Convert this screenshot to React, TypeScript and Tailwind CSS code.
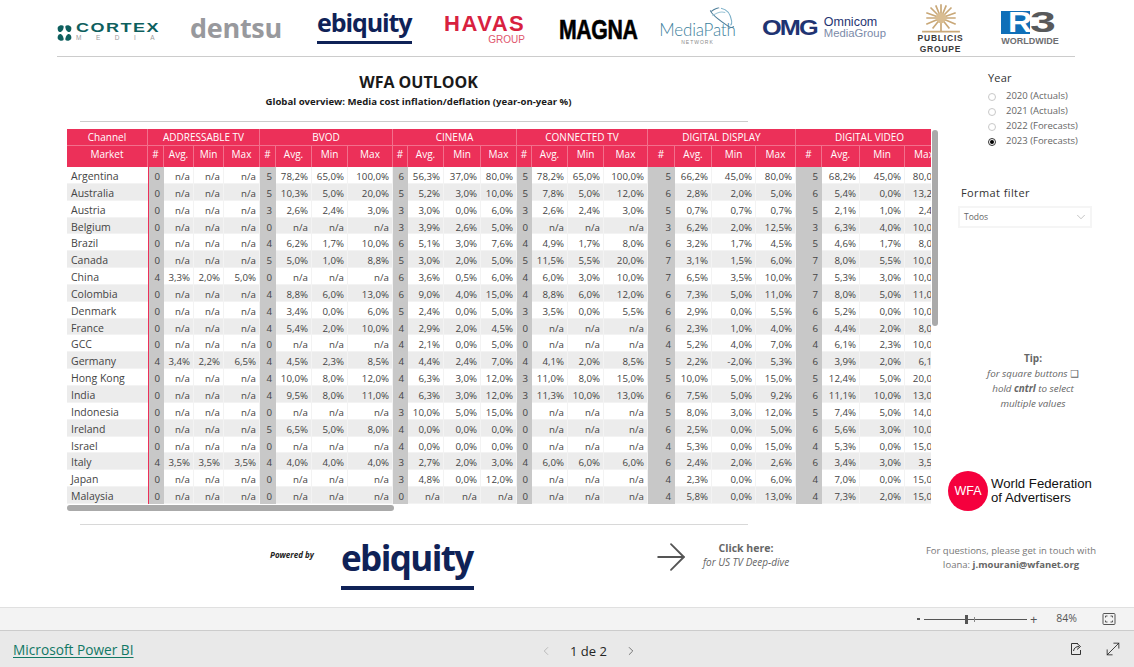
import React from 'react';
import { ArrowRight, ChevronDown, ChevronLeft, ChevronRight, MoveDiagonal } from 'lucide-react';

type Group = [string, string, string, string] | null;
type Row = [string, Group, Group, Group, Group, Group, Group];

const rows: Row[] = [
  ['Argentina', null, ['5', '78,2%', '65,0%', '100,0%'], ['6', '56,3%', '37,0%', '80,0%'], ['5', '78,2%', '65,0%', '100,0%'], ['5', '66,2%', '45,0%', '80,0%'], ['5', '68,2%', '45,0%', '80,0%']],
  ['Australia', null, ['5', '10,3%', '5,0%', '20,0%'], ['5', '5,2%', '3,0%', '10,0%'], ['5', '7,8%', '5,0%', '12,0%'], ['6', '2,8%', '2,0%', '5,0%'], ['6', '5,4%', '0,0%', '13,2%']],
  ['Austria', null, ['3', '2,6%', '2,4%', '3,0%'], ['3', '3,0%', '0,0%', '6,0%'], ['3', '2,6%', '2,4%', '3,0%'], ['5', '0,7%', '0,7%', '0,7%'], ['5', '2,1%', '1,0%', '2,4%']],
  ['Belgium', null, null, ['3', '3,9%', '2,6%', '5,0%'], null, ['3', '6,2%', '2,0%', '12,5%'], ['3', '6,3%', '4,0%', '10,0%']],
  ['Brazil', null, ['4', '6,2%', '1,7%', '10,0%'], ['6', '5,1%', '3,0%', '7,6%'], ['4', '4,9%', '1,7%', '8,0%'], ['6', '3,2%', '1,7%', '4,5%'], ['5', '4,6%', '1,7%', '8,0%']],
  ['Canada', null, ['5', '5,0%', '1,0%', '8,8%'], ['5', '3,0%', '2,0%', '5,0%'], ['5', '11,5%', '5,5%', '20,0%'], ['7', '3,1%', '1,5%', '6,0%'], ['7', '8,0%', '5,5%', '10,0%']],
  ['China', ['4', '3,3%', '2,0%', '5,0%'], null, ['6', '3,6%', '0,5%', '6,0%'], ['4', '6,0%', '3,0%', '10,0%'], ['7', '6,5%', '3,5%', '10,0%'], ['7', '5,3%', '3,0%', '10,0%']],
  ['Colombia', null, ['4', '8,8%', '6,0%', '13,0%'], ['6', '9,0%', '4,0%', '15,0%'], ['4', '8,8%', '6,0%', '12,0%'], ['6', '7,3%', '5,0%', '11,0%'], ['7', '8,0%', '5,0%', '11,0%']],
  ['Denmark', null, ['4', '3,4%', '0,0%', '6,0%'], ['5', '2,4%', '0,0%', '5,0%'], ['3', '3,5%', '0,0%', '5,5%'], ['6', '2,9%', '0,0%', '5,5%'], ['6', '5,2%', '0,0%', '10,0%']],
  ['France', null, ['4', '5,4%', '2,0%', '10,0%'], ['4', '2,9%', '2,0%', '4,5%'], null, ['6', '2,3%', '1,0%', '4,0%'], ['6', '4,4%', '2,0%', '8,0%']],
  ['GCC', null, null, ['4', '2,1%', '0,0%', '5,0%'], null, ['4', '5,2%', '4,0%', '7,0%'], ['4', '6,1%', '2,3%', '10,0%']],
  ['Germany', ['4', '3,4%', '2,2%', '6,5%'], ['4', '4,5%', '2,3%', '8,5%'], ['4', '4,4%', '2,4%', '7,0%'], ['4', '4,1%', '2,0%', '8,5%'], ['5', '2,2%', '-2,0%', '5,3%'], ['6', '3,9%', '2,0%', '6,1%']],
  ['Hong Kong', null, ['4', '10,0%', '8,0%', '12,0%'], ['4', '6,3%', '3,0%', '12,0%'], ['3', '11,0%', '8,0%', '15,0%'], ['5', '10,0%', '5,0%', '15,0%'], ['5', '12,4%', '5,0%', '20,0%']],
  ['India', null, ['4', '9,5%', '8,0%', '11,0%'], ['4', '6,3%', '3,0%', '12,0%'], ['3', '11,3%', '10,0%', '13,0%'], ['6', '7,5%', '5,0%', '9,2%'], ['6', '11,1%', '10,0%', '13,0%']],
  ['Indonesia', null, null, ['3', '10,0%', '5,0%', '15,0%'], null, ['5', '8,0%', '3,0%', '12,0%'], ['5', '7,4%', '5,0%', '14,0%']],
  ['Ireland', null, ['5', '6,5%', '5,0%', '8,0%'], ['4', '0,0%', '0,0%', '0,0%'], null, ['6', '2,5%', '0,0%', '5,0%'], ['6', '5,6%', '3,0%', '10,0%']],
  ['Israel', null, null, ['4', '0,0%', '0,0%', '0,0%'], null, ['4', '5,3%', '0,0%', '15,0%'], ['4', '5,3%', '0,0%', '15,0%']],
  ['Italy', ['4', '3,5%', '3,5%', '3,5%'], ['4', '4,0%', '4,0%', '4,0%'], ['3', '2,7%', '2,0%', '3,0%'], ['4', '6,0%', '6,0%', '6,0%'], ['6', '2,4%', '2,0%', '2,6%'], ['6', '3,4%', '3,0%', '3,5%']],
  ['Japan', null, null, ['3', '4,8%', '0,0%', '12,0%'], null, ['4', '2,3%', '0,0%', '6,0%'], ['4', '7,0%', '0,0%', '15,0%']],
  ['Malaysia', null, null, null, null, ['4', '5,8%', '0,0%', '13,0%'], ['4', '7,3%', '2,0%', '15,0%']],
];

const channels = ['ADDRESSABLE TV', 'BVOD', 'CINEMA', 'CONNECTED TV', 'DIGITAL DISPLAY', 'DIGITAL VIDEO'];

// same columns for both header rows and the body
const gridCols =
  'grid grid-cols-[81px_16px_30px_30px_36px_16px_36px_36px_45px_15px_36px_37px_36px_15px_36px_36px_44px_27px_37px_44px_40px_26px_38px_45px_39px]';

const CortexLogo = () => (
  <div className="flex w-[103px] items-center gap-[4px] pt-[9px]">
    <svg viewBox="0 0 16 18" className="h-[18px] w-[15px] shrink-0" fill="#0e5f5e">
      <path d="M1 2.500C2.500 .2 6 .2 7 1.500c.5 2-.8 5.500-3 6.500C1.500 8.500 0 5 1 2.500Z" />
      <path d="M15 2.500C13.500 .2 10 .2 9 1.500c-.5 2 .8 5.500 3 6.500 2.500.5 4-3 3-5.500Z" />
      <path d="M1 15.500c1.500 2.300 5 2.300 6 1 .5-2-.8-5.500-3-6.500-2.500-.5-4 3-3 5.500Z" />
      <path d="M15 15.500c-1.500 2.300-5 2.300-6 1-.5-2 .8-5.500 3-6.500 2.500-.5 4 3 3 5.500Z" />
    </svg>
    <div className="flex flex-col">
      <span className="origin-left scale-x-[1.5] font-['Liberation_Sans'] text-[12px] leading-[11px] font-bold tracking-[1px] text-[#0e5f5e]">CORTEX</span>
      <span className="font-['Liberation_Sans'] text-[6.500px] leading-[8px] tracking-[14.500px] whitespace-nowrap text-[#9a9a9a]">MEDIA</span>
    </div>
  </div>
);

const EbiquityLogo = ({ big }: { big?: boolean }) => (
  <div className={big ? 'flex w-[133px] flex-col' : 'flex w-[95px] flex-col'}>
    <span
      className={
        big
          ? "font-['Open_Sans'] text-[35px] leading-[38px] font-bold tracking-[-1.600px] whitespace-nowrap text-[#0f2257]"
          : "font-['Open_Sans'] text-[25px] leading-[27px] font-bold tracking-[-1.100px] whitespace-nowrap text-[#0f2257]"
      }
    >
      ebiquity
    </span>
    <div className={big ? 'mt-[9px] h-[4px] bg-[#0f2257]' : 'mt-[5px] h-[3px] bg-[#0f2257]'} />
  </div>
);

const MediaPathLogo = () => (
  <div className="relative flex w-[75px] flex-col items-center pt-[11px]">
    <svg viewBox="0 0 30 24" className="absolute top-[-3px] right-[-2px] h-[26px] w-[32px]" fill="none" stroke="#4f7f9a" strokeWidth="1">
      <path d="M6 4C9 1 13 .5 13 1M5 3c1 4 8 9 17 15 2 1.500 4 1 5 0" />
      <path d="M15 1c6 1 9 6 10 12 .3 2 0 3-1 4" stroke="#7cb0c8" />
      <path d="M7 8c4-3 9-4 12-3" stroke="#9cc5d6" />
    </svg>
    <span className="font-['Lato'] text-[17px] leading-[18px] font-light tracking-[-.2px] whitespace-nowrap text-[#3d7f9d]">MediaPath</span>
    <span className="font-['Liberation_Sans'] text-[5px] leading-[7px] tracking-[1px] text-[#8a8a8a]">NETWORK</span>
  </div>
);

const PublicisLogo = () => (
  <div className="flex w-[45px] flex-col items-center">
    <svg viewBox="0 0 40 28" className="h-[30px] w-[42px]" stroke="#c9a878" strokeWidth="1.600" fill="none">
      <path d="M20 14V1M20 14l-5-12M20 14l5-12M20 14 10 4M20 14 30 4M20 14 6 9M20 14 34 9M20 14H6M20 14h14M20 14 6 20M20 14l14 6M20 14l-8 10M20 14l8 10M20 14v13M2 27h36" />
      <circle cx="20" cy="14" r="5" fill="#d9bd92" stroke="none" />
    </svg>
    <span className="font-['Liberation_Sans'] text-[8.500px] leading-[10px] font-bold tracking-[.8px] text-[#3a3a3a]">PUBLICIS</span>
    <span className="mt-[1px] font-['Liberation_Sans'] text-[8.500px] leading-[10px] font-bold tracking-[.8px] text-[#3a3a3a]">GROUPE</span>
  </div>
);

const R3Logo = () => (
  <div className="flex w-[58px] flex-col items-center">
    <div className="relative flex h-[23px] w-[58px] items-center">
      <div className="h-[23px] w-[29px] bg-[#0f6fb8]" />
      <span className="absolute top-0 left-[7px] origin-left scale-x-[1.15] font-['Liberation_Sans'] text-[29px] leading-[23px] font-bold text-white">R</span>
      <span className="absolute top-0 left-[29px] origin-left scale-x-[1.6] font-['Liberation_Sans'] text-[29px] leading-[23px] font-bold text-[#58595b]">3</span>
    </div>
    <span className="mt-[2px] font-['Liberation_Sans'] text-[9px] leading-[10px] font-bold whitespace-nowrap text-[#6d6e71]">WORLDWIDE</span>
  </div>
);

const LogoBar = () => (
  <div className="ml-[57px] flex h-[57px] w-[1018px] items-center border-b border-[#cccccc]">
    <CortexLogo />
    <span className="ml-[30px] w-[91px] font-['Open_Sans'] text-[27px] leading-[30px] font-bold tracking-[-.3px] text-[#98999d]">dentsu</span>
    <div className="ml-[36px] pb-[3px]">
      <EbiquityLogo />
    </div>
    <div className="ml-[32px] flex w-[81px] flex-col items-end pt-[3px]">
      <span className="w-[81px] text-center font-['Liberation_Sans'] text-[22px] leading-[19px] font-bold tracking-[1.500px] text-[#d8213f]">HAVAS</span>
      <span className="mt-[1px] font-['Liberation_Sans'] text-[10px] leading-[11px] text-[#e0566d]">GROUP</span>
    </div>
    <span className="mt-[3px] ml-[34px] w-[74px] origin-left scale-x-[.76] font-['Liberation_Sans'] text-[28px] leading-[30px] font-bold tracking-[-.5px] text-black [-webkit-text-stroke:.6px_black]">MAGNA</span>
    <div className="ml-[27px]">
      <MediaPathLogo />
    </div>
    <div className="ml-[27px] flex w-[119px] items-center gap-[5px]">
      <span className="origin-left scale-x-[1.15] font-['Liberation_Sans'] text-[22px] leading-[24px] font-bold tracking-[-1.600px] text-[#1f3472]">OMG</span>
      <div className="ml-[9px] flex flex-col">
        <span className="font-['Liberation_Sans'] text-[12.500px] leading-[11px] text-[#1f3472]">Omnicom</span>
        <span className="font-['Liberation_Sans'] text-[11.300px] leading-[11px] text-[#7b8aa8]">MediaGroup</span>
      </div>
    </div>
    <div className="ml-[37px]">
      <PublicisLogo />
    </div>
    <div className="ml-[38px]">
      <R3Logo />
    </div>
  </div>
);

const HeaderCell = ({ label }: { label: string }) => (
  <div className="h-[21px] border-r border-[#f2708c] pt-[1px] text-center text-[10px] leading-[15px]">{label}</div>
);

const DataTable = () => (
  <div className="relative mt-[7px] ml-[67px] w-[864px]">
    <div className="overflow-hidden">
      <div className="w-[877px]">
        <div className={`${gridCols} h-[17px] border-b border-[#f2708c] bg-[#ec3059] text-[10px] leading-[16px] text-white`}>
          <div className="border-r border-[#f2708c] text-center">Channel</div>
          {channels.map(c => (
            <div key={c} className="col-span-4 border-r border-[#f2708c] text-center">
              {c}
            </div>
          ))}
        </div>
        <div className={`${gridCols} h-[21px] bg-[#ec3059] text-white`}>
          <HeaderCell label="Market" />
          {channels.map(c => (
            <React.Fragment key={c}>
              <HeaderCell label="#" />
              <HeaderCell label="Avg." />
              <HeaderCell label="Min" />
              <HeaderCell label="Max" />
            </React.Fragment>
          ))}
        </div>
        {rows.map((r, i) => (
          <div
            key={r[0]}
            className={`${gridCols} h-[16.850px] border-b border-[#f3f3f3] text-[9.700px] leading-[19px] text-[#444444] ${i % 2 === 1 ? 'bg-[#ececec]' : 'bg-white'}`}
          >
            <div className="pl-[4px] text-[10.500px]">{r[0]}</div>
            {r.slice(1).map((g, gi) => {
              const group = (g as Group) ?? ['0', 'n/a', 'n/a', 'n/a'];
              return (
                <React.Fragment key={gi}>
                  <div className={`bg-[#c8c8c8] pr-[4px] text-right ${gi === 0 ? 'border-l border-[#ec3059]' : ''}`}>{group[0]}</div>
                  <div className="border-r border-[#f3f3f3] pr-[3px] text-right">{group[1]}</div>
                  <div className="border-r border-[#f3f3f3] pr-[3px] text-right">{group[2]}</div>
                  <div className="border-r border-[#f3f3f3] pr-[3px] text-right">{group[3]}</div>
                </React.Fragment>
              );
            })}
          </div>
        ))}
      </div>
    </div>
    {/* scrollbars sit over the table edge */}
    <div className="absolute top-[1px] right-[-7px] h-[196px] w-[6px] rounded-[3px] bg-[#aaaaaa]" />
    <div className="absolute bottom-[-7px] left-0 h-[6px] w-[327px] rounded-[3px] bg-[#aaaaaa]" />
  </div>
);

const FooterLeft = () => (
  <div className="flex h-[82px] items-start">
    <span className="mt-[25px] ml-[270px] w-[71px] text-[8px] leading-[10px] font-bold text-[#222222] italic">Powered by</span>
    <div className="mt-[14px]">
      <EbiquityLogo big />
    </div>
    <ArrowRight size={44} strokeWidth={1} className="mt-[10px] ml-[175px] shrink-0 text-[#555555]" />
    <div className="mt-[16px] ml-[3px] flex w-[100px] flex-col items-center whitespace-nowrap text-[#666666]">
      <span className="text-[10.500px] leading-[15px] font-bold">Click here:</span>
      <span className="text-[10px] leading-[13px] italic">for US TV Deep-dive</span>
    </div>
  </div>
);

const YEARS = ['2020 (Actuals)', '2021 (Actuals)', '2022 (Forecasts)', '2023 (Forecasts)'];

const Sidebar = () => (
  <div className="flex w-[196px] flex-col text-[#666666]">
    <div className="mt-[14px] ml-[50px] text-[11px] leading-[14px] tracking-[.2px] text-[#333333]">Year</div>
    <div className="mt-[4px] ml-[50px] flex flex-col">
      {YEARS.map((y, i) => (
        <div key={y} className="flex h-[15px] items-center gap-[10px] text-[9.500px] text-[#666666]">
          <div className={`flex h-[8px] w-[8px] items-center justify-center rounded-full border ${i === 3 ? 'border-[#333333]' : 'border-[#c8c8c8]'}`}>
            {i === 3 && <div className="h-[4px] w-[4px] rounded-full bg-black" />}
          </div>
          {y}
        </div>
      ))}
    </div>
    <div className="mt-[37px] ml-[23px] text-[11px] leading-[14px] tracking-[.4px] text-[#333333]">Format filter</div>
    <div className="mt-[6px] ml-[20px] flex h-[22px] w-[134px] items-center justify-between border-2 border-[#f5f5f5] pr-[2px] pl-[4px] text-[8.500px] text-[#666666]">
      Todos
      <ChevronDown size={14} strokeWidth={1} className="text-[#999999]" />
    </div>
    <div className="mt-[123px] ml-[45px] flex w-[100px] flex-col items-center text-center whitespace-nowrap text-[#666666]">
      <div className="text-[10px] leading-[15px] font-bold">Tip:</div>
      <div className="text-[9.800px] leading-[15px] italic">
        for square buttons <span className="font-['DejaVu_Sans'] not-italic">❑</span>
      </div>
      <div className="text-[9.800px] leading-[15px] italic">
        hold <span className="font-bold">cntrl</span> to select
      </div>
      <div className="text-[9.800px] leading-[15px] italic">multiple values</div>
    </div>
    <div className="mt-[60px] ml-[10px] flex items-center gap-[3px]">
      <div className="flex h-[40px] w-[40px] items-center justify-center rounded-full bg-[#f5003d] font-['Liberation_Sans'] text-[12.500px] text-white">WFA</div>
      <div className="font-['Liberation_Sans'] text-[13.200px] leading-[14px] text-[#111111]">
        World Federation
        <br />
        of Advertisers
      </div>
    </div>
    <div className="mt-[33px] ml-[-27px] w-[200px] text-center text-[9.500px] leading-[14px] whitespace-nowrap text-[#777777]">
      For questions, please get in touch with
      <br />
      Ioana: <span className="font-bold text-[#666666]">j.mourani@wfanet.org</span>
    </div>
  </div>
);

const FitIcon = () => (
  <svg viewBox="0 0 14 14" className="h-[14px] w-[14px]" fill="none" stroke="#555555" strokeWidth="1">
    <rect x="1" y="1.500" width="12" height="11" rx="1" />
    <path d="M3.500 5.500V4h2M10.500 5.500V4h-2M3.500 8.500V10h2M10.500 8.500V10h-2" />
  </svg>
);

const ShareIcon = () => (
  <svg viewBox="0 0 16 16" className="h-[16px] w-[16px]" fill="none" stroke="#333333" strokeWidth="1">
    <path d="M10 2.500H3.500v11h9V9" />
    <path d="M5.500 10c.5-3 2.500-4.500 5.500-4.500M9 2.500l3.500 3-3.500 3" />
  </svg>
);

export default function App() {
  return (
    <div className="flex h-[667px] w-[1134px] flex-col overflow-hidden bg-white font-['Open_Sans',sans-serif]">
      <div className="h-[607px]">
        <LogoBar />
        <div className="flex">
          <div className="w-[938px]">
            <div className="w-[837px] text-center">
              <div className="mt-[15px] text-[16px] leading-[20px] font-bold text-[#1a1a1a]">WFA OUTLOOK</div>
              <div className="mt-[4px] text-[9.600px] leading-[12px] font-bold text-[#1a1a1a]">Global overview: Media cost inflation/deflation (year-on-year %)</div>
            </div>
            <div className="mt-[13px] ml-[80px] h-px w-[668px] bg-[#cccccc]" />
            <DataTable />
            <div className="mt-[20px] ml-[80px] h-px w-[668px] bg-[#d8d8d8]" />
            <FooterLeft />
          </div>
          <Sidebar />
        </div>
      </div>
      <div className="flex h-[23px] items-center justify-end border-t border-[#e0e0e0] bg-[#f3f3f3] pr-[18px] text-[#555555]">
        <span className="mr-[4px] h-[2px] w-[3px] bg-[#555555]" />
        <div className="relative h-px w-[103px] bg-[#555555]">
          <div className="absolute top-[-4px] left-[41px] h-[9px] w-[3px] bg-[#555555]" />
          <div className="absolute top-[-2px] left-[50px] h-[5px] w-px bg-[#888888]" />
        </div>
        <span className="ml-[3px] text-[13px] leading-none">+</span>
        <span className="ml-[19px] text-[10.500px]">84%</span>
        <div className="ml-[25px] flex">
          <FitIcon />
        </div>
      </div>
      <div className="relative flex h-[37px] flex-1 items-center justify-between border-t border-[#cccccc] bg-[#e9e9e9] pr-[11px] pl-[13px]">
        <span className="pt-[3px] text-[13.700px] text-[#117865] underline underline-offset-2">Microsoft Power BI</span>
        <div className="absolute top-[12px] left-[539px] flex items-center text-[#252525]">
          <ChevronLeft size={14} strokeWidth={1} className="text-[#999999]" />
          <span className="mx-[17px] text-[13px] leading-[16px]">1 de 2</span>
          <ChevronRight size={14} strokeWidth={1.200} className="text-[#444444]" />
        </div>
        <div className="flex items-center gap-[19px]">
          <ShareIcon />
          <MoveDiagonal size={20} strokeWidth={1} className="text-[#222222]" />
        </div>
      </div>
    </div>
  );
}
